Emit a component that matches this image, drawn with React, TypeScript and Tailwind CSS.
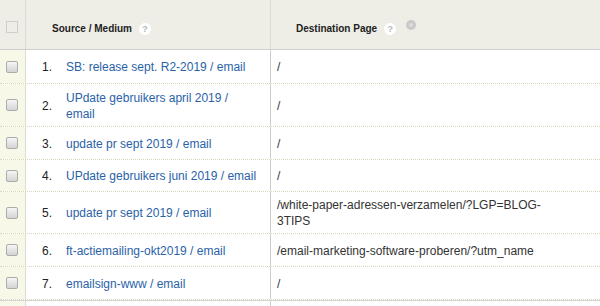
const rows = [
  { n: 1, source: "SB: release sept. R2-2019 / email", dest: "/", h: "h-[34px]" },
  { n: 2, source: "UPdate gebruikers april 2019 / email", dest: "/", h: "h-[43px]" },
  { n: 3, source: "update pr sept 2019 / email", dest: "/", h: "h-[33px]" },
  { n: 4, source: "UPdate gebruikers juni 2019 / email", dest: "/", h: "h-[32px]" },
  { n: 5, source: "update pr sept 2019 / email", dest: "/white-paper-adressen-verzamelen/?LGP=BLOG-3TIPS", h: "h-[42px]" },
  { n: 6, source: "ft-actiemailing-okt2019 / email", dest: "/email-marketing-software-proberen/?utm_name", h: "h-[33px]" },
  { n: 7, source: "emailsign-www / email", dest: "/", h: "h-[33px]" },
];

function HelpIcon() {
  return (
    <span className="inline-flex items-center justify-center w-[12px] h-[12px] rounded-full bg-white text-[9px] font-bold text-[#b5b5b5] leading-none">
      ?
    </span>
  );
}

function RowCheckbox() {
  return (
    <span className="block w-[12px] h-[12px] rounded-[2px] border border-[#acacac] bg-gradient-to-b from-[#f6f6f6] to-[#d4d4d4]" />
  );
}

export default function App() {
  return (
    <div
      className="w-[600px] h-[306px] overflow-hidden bg-white text-[12px] leading-[16px]"
      style={{ fontFamily: '"Liberation Sans", Arial, sans-serif' }}
    >
      {/* header */}
      <div className="grid grid-cols-[26px_245px_1fr] h-[50px] bg-[#eeeee6] border-b border-[#cfcfcf]">
        <div className="flex items-center pt-[4px] pl-[6px] border-r border-[#dcdcd4]">
          <span className="block w-[12px] h-[12px] border border-[#cfcfcf]" />
        </div>
        <div className="flex items-center pt-[9px] pl-[26px] border-r border-[#dcdcd4]">
          <span className="text-[10px] font-bold text-[#222]">Source / Medium</span>
          <span className="ml-[7px] flex">
            <HelpIcon />
          </span>
        </div>
        <div className="flex items-center pt-[9px] pl-[25px]">
          <span className="text-[10px] font-bold text-[#222]">Destination Page</span>
          <span className="ml-[7px] flex">
            <HelpIcon />
          </span>
          <span className="ml-[10px] -mt-[8px] flex items-center justify-center w-[10px] h-[10px] rounded-full bg-[#c9c9c9]">
            <span className="block w-[4px] h-[4px] rounded-full bg-[#dcdcdc]" />
          </span>
        </div>
      </div>

      {/* rows */}
      {rows.map((r) => (
        <div
          key={r.n}
          className={`grid grid-cols-[26px_245px_1fr] ${r.h} border-b border-dotted border-[#d8d8b8]`}
        >
          <div className="flex items-center pl-[6px] bg-[#f8f8e9] border-r border-[#dcdcd4]">
            <RowCheckbox />
          </div>
          <div className="flex items-center pt-[1px] pl-[16px] pr-[12px] border-r border-[#cccccc]">
            <span className="w-[24px] shrink-0 text-[#222]">{r.n}.</span>
            <a className="text-[#2a62a8] cursor-pointer">{r.source}</a>
          </div>
          <div className="flex items-center pt-[1px] pl-[6px]">
            <span className="max-w-[285px] break-words text-[#333]">{r.dest}</span>
          </div>
        </div>
      ))}

      <div className="grid grid-cols-[26px_245px_1fr] h-[40px] border-t border-[#d6d6d6]">
        <div className="bg-[#f8f8e9] border-r border-[#dcdcd4]" />
        <div className="border-r border-[#cccccc]" />
        <div />
      </div>
    </div>
  );
}
